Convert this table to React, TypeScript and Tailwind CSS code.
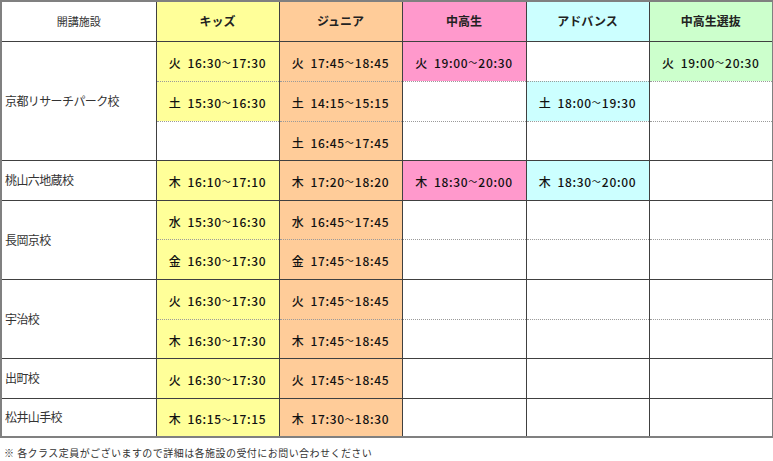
import React from "react";

type Cell = { t?: string; c?: string };
type Row = { name?: string; span?: number; cells: Cell[]; dottedTop?: boolean; h: string };

const Y = "bg-[#ffff99]";
const O = "bg-[#ffcc99]";
const P = "bg-[#ff99cc]";
const C = "bg-[#ccffff]";
const G = "bg-[#ccffcc]";
const W = "bg-white";

const rows: Row[] = [
  { name: "京都リサーチパーク校", span: 3, h: "h-[40px]", cells: [{ t: "火 16:30~17:30", c: Y }, { t: "火 17:45~18:45", c: O }, { t: "火 19:00~20:30", c: P }, { c: W }, { t: "火 19:00~20:30", c: G }] },
  { dottedTop: true, h: "h-[40px]", cells: [{ t: "土 15:30~16:30", c: Y }, { t: "土 14:15~15:15", c: O }, { c: W }, { t: "土 18:00~19:30", c: C }, { c: W }] },
  { dottedTop: true, h: "h-[39px]", cells: [{ c: W }, { t: "土 16:45~17:45", c: O }, { c: W }, { c: W }, { c: W }] },
  { name: "桃山六地蔵校", span: 1, h: "h-[40px]", cells: [{ t: "木 16:10~17:10", c: Y }, { t: "木 17:20~18:20", c: O }, { t: "木 18:30~20:00", c: P }, { t: "木 18:30~20:00", c: C }, { c: W }] },
  { name: "長岡京校", span: 2, h: "h-[39px]", cells: [{ t: "水 15:30~16:30", c: Y }, { t: "水 16:45~17:45", c: O }, { c: W }, { c: W }, { c: W }] },
  { dottedTop: true, h: "h-[40px]", cells: [{ t: "金 16:30~17:30", c: Y }, { t: "金 17:45~18:45", c: O }, { c: W }, { c: W }, { c: W }] },
  { name: "宇治校", span: 2, h: "h-[40px]", cells: [{ t: "火 16:30~17:30", c: Y }, { t: "火 17:45~18:45", c: O }, { c: W }, { c: W }, { c: W }] },
  { dottedTop: true, h: "h-[39px]", cells: [{ t: "木 16:30~17:30", c: Y }, { t: "木 17:45~18:45", c: O }, { c: W }, { c: W }, { c: W }] },
  { name: "出町校", span: 1, h: "h-[40px]", cells: [{ t: "火 16:30~17:30", c: Y }, { t: "火 17:45~18:45", c: O }, { c: W }, { c: W }, { c: W }] },
  { name: "松井山手校", span: 1, h: "h-[39px]", cells: [{ t: "木 16:15~17:15", c: Y }, { t: "木 17:30~18:30", c: O }, { c: W }, { c: W }, { c: W }] },
];

const headers: { t: string; c: string }[] = [
  { t: "キッズ", c: Y },
  { t: "ジュニア", c: O },
  { t: "中高生", c: P },
  { t: "アドバンス", c: C },
  { t: "中高生選抜", c: G },
];

function Time({ t }: { t: string }) {
  const [day, time] = t.split(" ");
  const [a, b] = time.split("~");
  return (
    <span className="inline-flex items-center text-[12px] font-medium text-[#111] tracking-[0.7px]">
      <span>{day}</span>
      <span className="ml-[6px]">{a}</span>
      <span className="font-normal text-[9px] tracking-[0px] mr-[1px]">～</span>
      <span>{b}</span>
    </span>
  );
}

export default function App() {
  return (
    <div className="w-[773px] h-[461px] bg-white font-['Noto_Sans_CJK_JP','Noto_Sans',sans-serif]">
      <table className="table-fixed border-collapse w-[772px] border-2 border-[#808080]">
        <colgroup>
          <col className="w-[155px]" />
          <col className="w-[123px]" />
          <col className="w-[123px]" />
          <col className="w-[124px]" />
          <col className="w-[123px]" />
          <col className="w-[124px]" />
        </colgroup>
        <thead>
          <tr className="h-[40px]">
            <th className="border-x border-x-[#404040] border-b border-b-[#404040] bg-white text-[11px] font-normal text-[#333] p-0">
              開講施設
            </th>
            {headers.map((h, i) => (
              <th
                key={i}
                className={`border-x border-x-[#404040] border-b border-b-[#404040] ${h.c} text-[12px] font-bold text-[#222] p-0`}
              >
                {h.t}
              </th>
            ))}
          </tr>
        </thead>
        <tbody>
          {rows.map((r, ri) => (
            <tr key={ri} className={r.h}>
              {r.name && (
                <td
                  rowSpan={r.span}
                  className="border-x border-x-[#404040] border-t border-t-[#404040] bg-white text-[12px] text-[#333] tracking-[-0.6px] pl-[3px] align-middle p-0"
                >
                  {r.name}
                </td>
              )}
              {r.cells.map((c, ci) => (
                <td
                  key={ci}
                  className={`${c.c} border-x border-x-[#404040] border-t ${
                    r.dottedTop
                      ? "border-t-[#9a9a9a] [border-top-style:dotted]"
                      : "border-t-[#404040]"
                  } text-center align-middle p-0`}
                >
                  {c.t ? <Time t={c.t} /> : null}
                </td>
              ))}
            </tr>
          ))}
        </tbody>
      </table>
      <div className="mt-[10px] pl-[4px] text-[10px] text-[#333] tracking-[0.45px] leading-none">
        ※ 各クラス定員がございますので詳細は各施設の受付にお問い合わせください
      </div>
    </div>
  );
}
